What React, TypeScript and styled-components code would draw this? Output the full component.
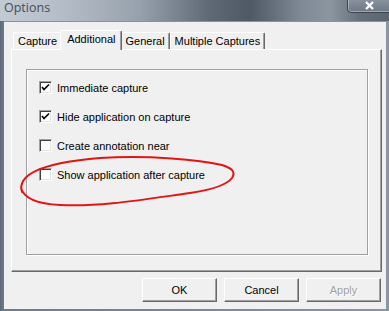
import styled, { createGlobalStyle } from "styled-components";

const Global = createGlobalStyle`
  html, body { margin: 0; padding: 0; background: #6b7683; }
  body { font-family: "Liberation Sans", Arial, sans-serif; font-size: 11px; color: #000; }
`;

const Window = styled.div`
  position: relative;
  width: 389px;
  height: 311px;
  display: flex;
  flex-direction: column;
  background: linear-gradient(90deg, #5d6a78 0px, #6f7b88 4px, #8b96a2 100%);
  overflow: hidden;
`;

const TitleBar = styled.div`
  height: 21px;
  display: flex;
  align-items: flex-start;
  justify-content: space-between;
  background: linear-gradient(
    90deg,
    #c2cad3 0px,
    #b5bec8 60px,
    #97a1ad 140px,
    #5f6976 210px,
    #4f5966 250px,
    #7f8995 300px,
    #8c96a1 330px,
    #66707c 360px,
    #5b6572 389px
  );
`;

const Title = styled.span`
  font-family: "Open Sans", "Noto Sans", sans-serif;
  font-size: 12.5px;
  color: #454e59;
  padding: 1px 0 0 4px;
  line-height: 14px;
`;

const CloseButton = styled.div`
  width: 43px;
  height: 13px;
  margin-top: -2px;
  margin-right: -3px;
  border: 1px solid #3c4450;
  border-radius: 0 0 4px 4px;
  box-shadow: inset 0 0 0 1px rgba(255, 255, 255, 0.35);
  background: linear-gradient(180deg, #8a94a0, #6e7886);
  display: flex;
  align-items: center;
  justify-content: center;
`;

const Client = styled.div`
  flex: 1;
  margin: 0 3px 2px 4px;
  background: #f0f0f0;
  display: flex;
  flex-direction: column;
  padding: 8px 5px 0 7px;
  border-top: 1px solid #8a939d;
`;

const TabStrip = styled.div`
  display: flex;
  align-items: flex-end;
  height: 19px;
  padding-left: 2px;
  position: relative;
  z-index: 1;
`;

const Tab = styled.div<{ $active?: boolean }>`
  box-sizing: border-box;
  height: ${(p) => (p.$active ? "20px" : "17px")};
  margin: ${(p) => (p.$active ? "0 -2px -1px -2px" : "0")};
  padding: ${(p) => (p.$active ? "1px 6px 0" : "1px 4px 0")};
  background: #f0f0f0;
  border-top: 1px solid #ffffff;
  border-left: 1px solid #ffffff;
  border-right: 1px solid #696969;
  box-shadow: inset -1px 0 0 #a0a0a0;
  border-radius: 2px 2px 0 0;
  line-height: 14px;
  white-space: nowrap;
  position: relative;
  z-index: ${(p) => (p.$active ? 2 : 1)};
`;

const Panel = styled.div`
  box-sizing: border-box;
  width: 371px;
  height: 223px;
  border-top: 1px solid #ffffff;
  border-left: 1px solid #ffffff;
  border-right: 1px solid #696969;
  border-bottom: 1px solid #696969;
  box-shadow: inset -1px -1px 0 #a0a0a0;
  padding: 19px 13px 0 14px;
`;

const Group = styled.div`
  box-sizing: border-box;
  width: 342px;
  height: 186px;
  border: 1px solid #a0a0a0;
  box-shadow: 1px 1px 0 #ffffff, inset 1px 1px 0 #ffffff;
  padding: 3px 0 0 12px;
  display: flex;
  flex-direction: column;
`;

const Row = styled.label`
  display: flex;
  align-items: center;
  gap: 5px;
  height: 29px;
`;

const Box = styled.span`
  box-sizing: border-box;
  width: 13px;
  height: 13px;
  background: #ffffff;
  border-top: 1px solid #a0a0a0;
  border-left: 1px solid #a0a0a0;
  border-right: 1px solid #ffffff;
  border-bottom: 1px solid #ffffff;
  box-shadow: inset 1px 1px 0 #404040, inset -1px -1px 0 #e3e3e3;
  display: flex;
  align-items: center;
  justify-content: center;
`;

const Buttons = styled.div`
  display: flex;
  justify-content: flex-end;
  gap: 7px;
  margin-top: 6px;
`;

const Button = styled.div<{ $disabled?: boolean }>`
  box-sizing: border-box;
  width: 75px;
  height: 24px;
  background: #f0f0f0;
  border-top: 1px solid #ffffff;
  border-left: 1px solid #ffffff;
  border-right: 1px solid #696969;
  border-bottom: 1px solid #696969;
  box-shadow: inset -1px -1px 0 #a0a0a0;
  display: flex;
  align-items: center;
  justify-content: center;
  color: ${(p) => (p.$disabled ? "#a0a0a0" : "#000")};
  text-shadow: ${(p) => (p.$disabled ? "1px 1px 0 #ffffff" : "none")};
`;

const Loop = styled.svg`
  position: absolute;
  left: 0;
  top: 0;
  pointer-events: none;
`;

function Check({ on }: { on?: boolean }) {
  return (
    <Box>
      {on && (
        <svg width="9" height="9" viewBox="0 0 9 9">
          <path d="M1 4 L3 6.5 L8 1.5" fill="none" stroke="#000" strokeWidth="1.6" />
        </svg>
      )}
    </Box>
  );
}

const options = [
  { label: "Immediate capture", on: true },
  { label: "Hide application on capture", on: true },
  { label: "Create annotation near", on: false },
  { label: "Show application after capture", on: false },
];

export default function App() {
  return (
    <Window>
      <Global />
      <TitleBar>
        <Title>Options</Title>
        <CloseButton>
          <svg width="11" height="9" viewBox="0 0 11 9">
            <path d="M2 1 L9 8 M9 1 L2 8" stroke="#ffffff" strokeWidth="2.2" />
          </svg>
        </CloseButton>
      </TitleBar>
      <Client>
        <TabStrip>
          <Tab>Capture</Tab>
          <Tab $active>Additional</Tab>
          <Tab>General</Tab>
          <Tab>Multiple Captures</Tab>
        </TabStrip>
        <Panel>
          <Group>
            {options.map((o) => (
              <Row key={o.label}>
                <Check on={o.on} />
                <span>{o.label}</span>
              </Row>
            ))}
          </Group>
        </Panel>
        <Buttons>
          <Button>OK</Button>
          <Button>Cancel</Button>
          <Button $disabled>Apply</Button>
        </Buttons>
      </Client>
      <Loop width="389" height="311" viewBox="0 0 389 311">
        <path
          d="M22 192 C17 176, 38 163, 100 158 C150 155, 200 160, 222 165 C232 168, 236 172, 232 178 C226 186, 210 190, 190 193 C140 200, 100 207, 60 205 C40 204, 24 199, 21 188"
          fill="none"
          stroke="#e21515"
          strokeWidth="2"
          strokeLinecap="round"
        />
      </Loop>
    </Window>
  );
}
